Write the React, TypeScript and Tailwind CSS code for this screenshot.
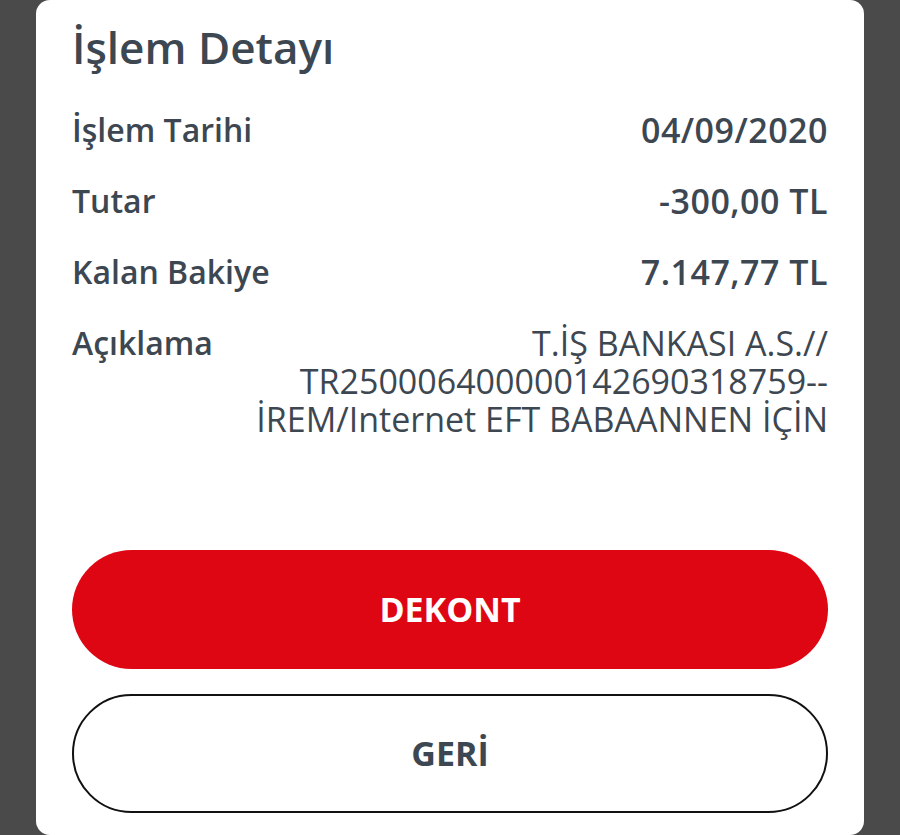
export default function App() {
  const rows = [
    { label: "İşlem Tarihi", value: "04/09/2020" },
    { label: "Tutar", value: "-300,00 TL" },
    { label: "Kalan Bakiye", value: "7.147,77 TL" },
  ]

  return (
    <div
      className="w-[900px] h-[835px] overflow-hidden bg-[#4a4a4a] px-[36px]"
      style={{ fontFamily: '"Open Sans", "Noto Sans", sans-serif' }}
    >
      <div className="h-[835px] bg-white rounded-[14px] px-[36px] pt-[20px] flex flex-col text-[#3d4751]">
        <h1 className="text-[44px] leading-[54px] font-semibold">İşlem Detayı</h1>

        <div className="mt-[37px] flex flex-col gap-[33px]">
          {rows.map((row) => (
            <div key={row.label} className="flex justify-between items-center h-[38px] font-semibold">
              <span className="text-[32px] leading-[38px]">{row.label}</span>
              <span className="text-[34px] leading-[38px] tracking-[0.5px]">{row.value}</span>
            </div>
          ))}
          <div className="flex justify-between">
            <span className="text-[32px] leading-[38px] font-semibold">Açıklama</span>
            <span className="text-right text-[34px] leading-[38px] font-normal w-[640px]">
              T.İŞ BANKASI A.S.//
              <br />
              TR250006400000142690318759--
              <br />
              İREM/Internet EFT BABAANNEN İÇİN
            </span>
          </div>
        </div>

        <div className="mt-auto mb-[22px] flex flex-col gap-[25px]">
          <button className="h-[119px] w-full rounded-full bg-[#df0614] text-white text-[34px] font-bold">
            DEKONT
          </button>
          <button className="h-[119px] w-full rounded-full border-2 border-[#111111] bg-white text-[#3d4751] text-[34px] font-bold">
            GERİ
          </button>
        </div>
      </div>
    </div>
  )
}
